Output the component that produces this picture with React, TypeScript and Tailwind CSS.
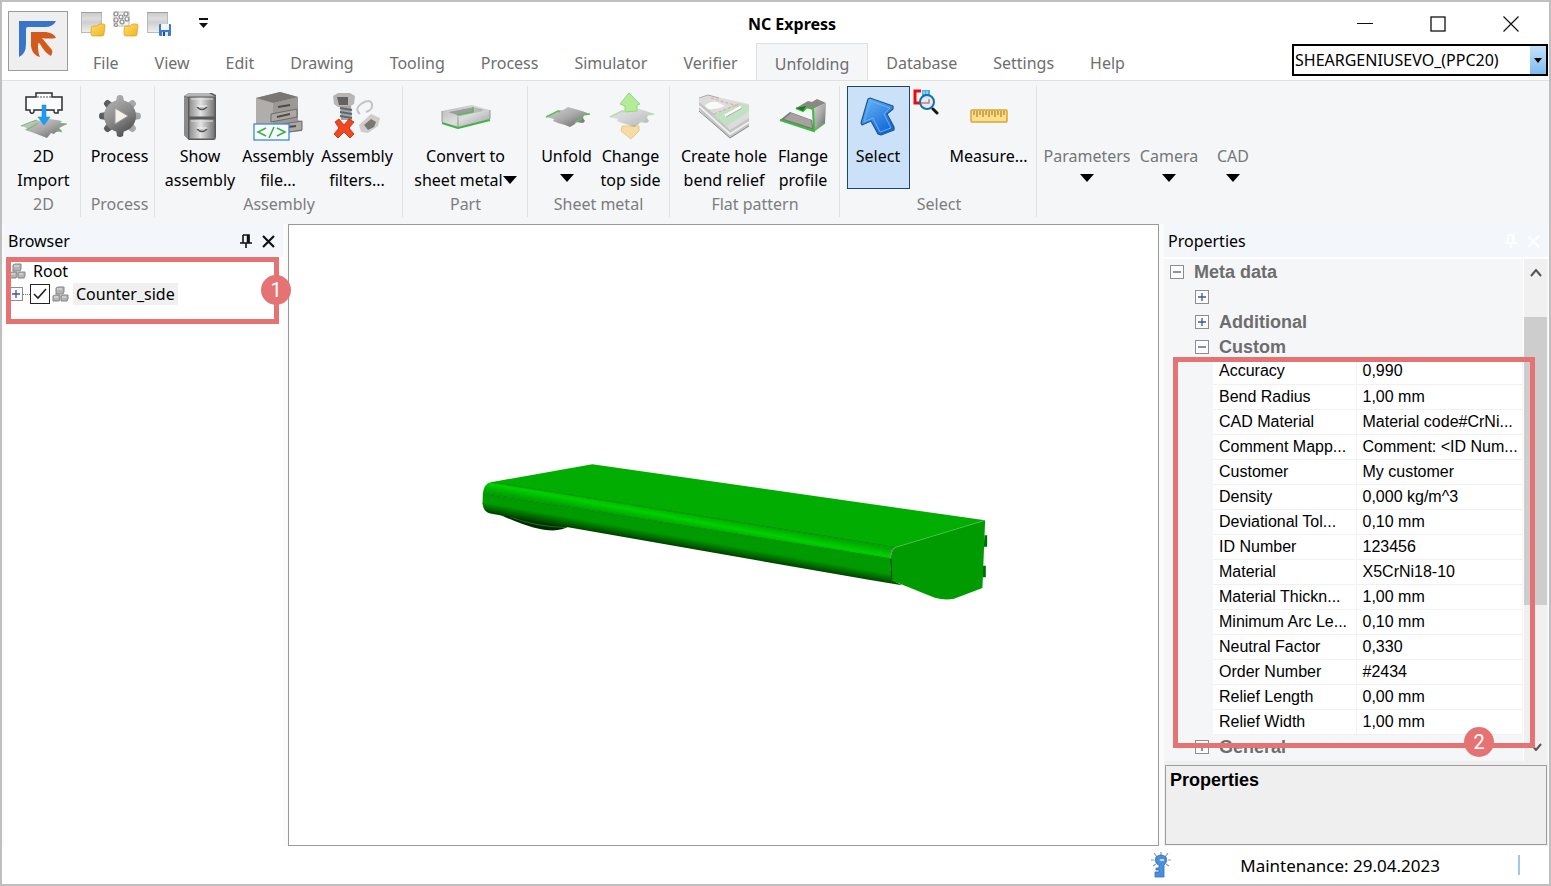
import React from 'react';
import { clsx } from 'clsx';

const tabs = [
  'File',
  'View',
  'Edit',
  'Drawing',
  'Tooling',
  'Process',
  'Simulator',
  'Verifier',
  'Unfolding',
  'Database',
  'Settings',
  'Help',
];

const customProps = [
  ['Accuracy', '0,990'],
  ['Bend Radius', '1,00 mm'],
  ['CAD Material', 'Material code#CrNi...'],
  ['Comment Mapp...', 'Comment: <ID Num...'],
  ['Customer', 'My customer'],
  ['Density', '0,000 kg/m^3'],
  ['Deviational Tol...', '0,10 mm'],
  ['ID Number', '123456'],
  ['Material', 'X5CrNi18-10'],
  ['Material Thickn...', '1,00 mm'],
  ['Minimum Arc Le...', '0,10 mm'],
  ['Neutral Factor', '0,330'],
  ['Order Number', '#2434'],
  ['Relief Length', '0,00 mm'],
  ['Relief Width', '1,00 mm'],
];

/* ---------- icons ---------- */

// shared gradients, referenced by id from the icons below
const Gradients = () => (
  <svg width="0" height="0" className="absolute" aria-hidden="true">
    <defs>
      <linearGradient id="metal" x1="0" y1="0" x2="1" y2="1">
        <stop offset="0" stopColor="#d6d6d6" />
        <stop offset="0.5" stopColor="#a8a8a8" />
        <stop offset="1" stopColor="#5c5c5c" />
      </linearGradient>
      <linearGradient id="gear" gradientUnits="userSpaceOnUse" x1="10" y1="4" x2="34" y2="40">
        <stop offset="0" stopColor="#b4b4b4" />
        <stop offset="0.5" stopColor="#8a8a8a" />
        <stop offset="1" stopColor="#4a4a4a" />
      </linearGradient>
      <linearGradient id="metalLight" x1="0" y1="0" x2="1" y2="1">
        <stop offset="0" stopColor="#b4b4b4" />
        <stop offset="0.5" stopColor="#dedede" />
        <stop offset="1" stopColor="#9a9a9a" />
      </linearGradient>
      <linearGradient id="drawer" x1="0" y1="0" x2="1" y2="0">
        <stop offset="0" stopColor="#8d8d8d" />
        <stop offset="0.45" stopColor="#e2e2e2" />
        <stop offset="1" stopColor="#727272" />
      </linearGradient>
      <linearGradient id="sheet" x1="0" y1="0" x2="0" y2="1">
        <stop offset="0" stopColor="#c9c9c9" />
        <stop offset="0.3" stopColor="#dcdcdc" />
        <stop offset="0.5" stopColor="#cfcfcf" />
        <stop offset="1" stopColor="#f0f0f0" />
      </linearGradient>
      <linearGradient id="cursor" x1="0" y1="0" x2="0.6" y2="1">
        <stop offset="0" stopColor="#6db9f7" />
        <stop offset="1" stopColor="#1668d8" />
      </linearGradient>
      <linearGradient id="folder" x1="0" y1="0" x2="1" y2="1">
        <stop offset="0" stopColor="#ffdc6b" />
        <stop offset="1" stopColor="#f0b323" />
      </linearGradient>
    </defs>
  </svg>
);

const Logo = () => (
  <svg width="58" height="58" viewBox="0 0 58 58">
    <path d="M10 9H47Q44 15 36 15H19Q17 15 17 17V32Q17 42 10 45Z" fill="#3a74c8" />
    <path
      d="M22 20H37Q45 21 47 26Q40 27 33 26L43 38Q44 40 42 44Q36 41 31 32Q29 29 29 34Q29 41 31 45Q23 43 22 34Z"
      fill="#d25a1c"
    />
  </svg>
);

const Folder = () => (
  <path
    d="M11 18Q11 15 14 15H17L19 13H24Q25 13 25 15L24 23Q24 25 22 25H13Q11 25 11 23Z"
    fill="url(#folder)"
    stroke="#dba019"
    strokeWidth="0.7"
  />
);

const OpenSheetIcon = () => (
  <svg width="26" height="26" viewBox="0 0 26 26">
    <rect x="1.500" y="1.500" width="20" height="20" fill="url(#sheet)" stroke="#b9b9b9" />
    <path d="M1 1.500H22" stroke="#a0a0a0" />
    <Folder />
  </svg>
);

const OpenPartsIcon = () => (
  <svg width="26" height="26" viewBox="0 0 26 26">
    <g fill="#f4f4f4" stroke="#8a8a8a" strokeWidth="1.2">
      <rect x="1" y="1" width="15" height="14" stroke="#c5c5c5" />
      <circle cx="3" cy="3" r="2" />
      <circle cx="8" cy="6" r="2" />
      <circle cx="13" cy="3" r="2" />
      <circle cx="3" cy="9" r="2" />
      <circle cx="9" cy="11" r="2" />
      <circle cx="14" cy="8" r="2" />
      <circle cx="3" cy="14" r="1.5" />
    </g>
    <Folder />
  </svg>
);

const SaveSheetIcon = () => (
  <svg width="26" height="26" viewBox="0 0 26 26">
    <rect x="1.500" y="1.500" width="20" height="20" fill="url(#sheet)" stroke="#b9b9b9" />
    <path d="M1 1.500H22" stroke="#a0a0a0" />
    <rect x="13" y="13" width="12" height="12" rx="1" fill="#3f78cf" />
    <rect x="15" y="13" width="8" height="6" fill="#f2f6fc" />
    <rect x="16" y="21" width="6" height="4" fill="#dfe8f5" />
    <rect x="17" y="21" width="2" height="4" fill="#27488c" />
  </svg>
);

const ImportIcon = () => (
  <svg width="48" height="50" viewBox="0 0 48 50">
    <path d="M1 35L10 32L16 29L22 30L30 28L42 30L40 32L47 33L39 37L42 40L36 41L34 43L31 42L27 47L14 42L5 39L7 37Z" fill="url(#metal)" />
    <path d="M1 35L11 31L17 29M7 39L18 32M38 32L47 33M37 39L42 41" stroke="#79bd6a" strokeWidth="1.200" fill="none" />
    <path
      d="M6 6H16V2H32V6H42V19H38V22H35Q34 22 34 20V19H14V20Q14 23 11 22Q10 22 10 19H6Z"
      fill="#fbfcfd"
      stroke="#2d2d2d"
      strokeWidth="1.500"
    />
    <path d="M17 6H31" stroke="#555" strokeDasharray="2 1" />
    <path d="M22 14H26V26H30L24 34L18 26H22Z" fill="#1e9cf2" stroke="#1688d8" strokeWidth="0.500" />
  </svg>
);

const GearIcon = () => (
  <svg width="44" height="44" viewBox="0 0 44 44">
    <g fill="url(#gear)">
      <path d="M18 8L19 2Q22 0 25 2L26 8V36L25 42Q22 44 19 42L18 36Z" />
      <path d="M18 8L19 2Q22 0 25 2L26 8V36L25 42Q22 44 19 42L18 36Z" transform="rotate(45 22 22)" />
      <path d="M18 8L19 2Q22 0 25 2L26 8V36L25 42Q22 44 19 42L18 36Z" transform="rotate(90 22 22)" />
      <path d="M18 8L19 2Q22 0 25 2L26 8V36L25 42Q22 44 19 42L18 36Z" transform="rotate(135 22 22)" />
      <circle cx="22" cy="22" r="16" />
    </g>
    <path d="M17 14L30 22L17 30Z" fill="#f5f2ea" stroke="#9a9a9a" />
  </svg>
);

const CabinetIcon = () => (
  <svg width="36" height="50" viewBox="0 0 36 50">
    <path d="M2 5L7 2H30L34 4V46L32 49H7L2 44Z" fill="#5b5b5b" />
    <path d="M2 5L7 2H27L34 6H7Z" fill="#b5b5b5" />
    <path d="M2 5L6 7V48L2 44Z" fill="#8b8b8b" />
    <rect x="7" y="6" width="26" height="20" fill="url(#drawer)" stroke="#5b5b5b" />
    <rect x="7" y="28" width="26" height="20" fill="url(#drawer)" stroke="#5b5b5b" />
    <path d="M9 8H31M9 30H31" stroke="#e3e3e3" />
    <path d="M15 16Q20 21 25 16M15 38Q20 43 25 38" stroke="#555" strokeWidth="1.500" fill="#ccc" />
    <path d="M15 15H25M15 37H25" stroke="#f4f4f4" />
  </svg>
);

const AssemblyFileIcon = () => (
  <svg width="50" height="50" viewBox="0 0 50 50">
    <path d="M3 7L27 1L45 6V29L49 31V40L20 43L3 36Z" fill="#9b9895" />
    <path d="M3 7L27 1L45 6L20 12Z" fill="#7a7673" />
    <path d="M3 7L20 12V40L3 35Z" fill="#b1adaa" />
    <path d="M20 12L45 6V29L20 35Z" fill="#9c9895" />
    <path d="M18 23L44 18V26L18 31ZM30 33L49 30V39L30 42Z" fill="#aca8a5" stroke="#6e6a68" strokeWidth="1" />
    <path d="M25 16L37 14M24 26L37 23M35 36L43 35" stroke="#4e4b49" strokeWidth="2" />
    <rect x="1" y="33" width="35" height="16" fill="#f7fbff" stroke="#4487d4" strokeWidth="1.300" />
    <path d="M13 37L5 41L13 45M24 37L32 41L24 45M21 36L16 47" stroke="#3fae49" strokeWidth="1.600" fill="none" />
  </svg>
);

const AssemblyFiltersIcon = () => (
  <svg width="50" height="48" viewBox="0 0 50 48">
    <path d="M1 4L6 1L18 1L23 4L22 12L17 15H6L2 12Z" fill="#b9b5b2" />
    <path d="M5 5H16V13H7Z" fill="#65615e" />
    <path d="M8 14H19L20 28H9Z" fill="#a5a5a5" />
    <path d="M8 16L20 18M8 20L20 22M8 24L20 26" stroke="#5e6770" strokeWidth="2" />
    <path d="M28 22Q22 17 29 12Q38 6 40 12Q41 18 34 20" fill="none" stroke="#c4c4c4" strokeWidth="2" />
    <path d="M27 33L39 22L48 26L46 34L36 41L29 40Z" fill="#cfccca" />
    <path d="M32 33L39 27L44 30L42 35L36 38Z" fill="#7a7674" />
    <path
      d="M3 30L7 27L12 33L17 27L22 30L17 36L22 42L18 46L12 40L6 46L2 42L7 36Z"
      fill="#f4471f"
      stroke="#b82a0c"
      strokeWidth="0.800"
    />
  </svg>
);

const ConvertIcon = () => (
  <svg width="50" height="26" viewBox="0 0 50 26">
    <path d="M1 8L31 2L49 7V17L17 25L1 20Z" fill="url(#metalLight)" />
    <path d="M5 9L31 4L45 7L18 13Z" fill="#9c9c9c" stroke="#cfcfcf" />
    <path d="M15 12L32 9L31 4L42 8L19 13Z" fill="#b9bcb9" />
    <path d="M16 12L32 9V4" stroke="#58b75b" strokeWidth="1.500" fill="none" />
    <path d="M1 20L17 25L49 17" stroke="#46b04a" strokeWidth="2" fill="none" />
    <path d="M17 14V24M1 8V19M49 7V16" stroke="#8f9d8f" fill="none" />
  </svg>
);

const SheetPlate = () => (
  <g>
    <path
      d="M3 14L15 7L20 7L25 4L39 8L47 11L41 12L40 15L42 18L40 20L33 19L32 21L27 24L22 22L15 20L10 18L11 16Z"
      fill="url(#metal)"
    />
    <path d="M3 14L15 8L17 9M40 12L47 11M33 19L38 16" stroke="#5fc258" strokeWidth="1.500" fill="none" />
  </g>
);

const UnfoldIcon = () => (
  <svg width="48" height="26" viewBox="0 0 48 26">
    <SheetPlate />
  </svg>
);

const ChangeSideIcon = () => (
  <svg width="48" height="50" viewBox="0 0 48 50">
    <path d="M15 35H32V40L24 48L14 40Z" fill="#f5dba4" stroke="#e8c987" />
    <g transform="translate(0 12)" opacity="0.45">
      <SheetPlate />
    </g>
    <path d="M22 2L33 13L30 14V20L18 21V15L13 13Z" fill="#b3eb98" stroke="#92d979" />
  </svg>
);

const HoleReliefIcon = () => (
  <svg width="50" height="48" viewBox="0 0 50 48">
    <path d="M0 6L9 3L50 12V34L31 46L0 18Z" fill="#dcdcdc" />
    <path d="M0 10L14 21L31 38L50 26V34L31 46L0 18Z" fill="#c3c3c3" />
    <path d="M0 14L31 42L50 30" stroke="#efefef" strokeWidth="2" fill="none" />
    <path d="M0 19L31 46L50 34" stroke="#8b8b8b" fill="none" />
    <path d="M0 6L9 3L20 6" stroke="#aaa" fill="none" />
    <path d="M13 24L38 11L50 13V19L28 34Z" fill="#b5e2b8" opacity="0.7" />
    <path d="M6 14Q10 9 18 10L26 14Q18 18 9 17Z" fill="#fafafa" />
    <path d="M12 6L42 15M15 22L40 12" stroke="#e6aaa5" strokeWidth="1.200" strokeDasharray="3 2" />
    <path d="M26 24L42 15" stroke="#fff" strokeWidth="3" />
    <path d="M27 25L43 16" stroke="#999" strokeWidth="0.800" />
  </svg>
);

const FlangeIcon = () => (
  <svg width="48" height="36" viewBox="0 0 48 36">
    <path d="M1 22L11 14L33 22L35 33Z" fill="#777" />
    <path d="M5 21L12 15L32 22L33 30Z" fill="#a6a29f" />
    <path d="M17 10L29 3L33 4L38 1L47 5L34 11L27 10L24 13Z" fill="#8a8785" />
    <path d="M34 11L47 5L46 25L35 33Z" fill="url(#metal)" />
    <path d="M1 22L35 33L34 11L28 9L24 13L17 10" fill="none" stroke="#3dbb3d" strokeWidth="2" />
    <path d="M17 10L27 8L24 13Z" fill="#1e7a1e" />
    <path d="M35 33L46 25" stroke="#4fc34f" strokeWidth="1.200" />
  </svg>
);

const CursorIcon = () => (
  <svg width="38" height="40" viewBox="0 0 38 40">
    <path
      d="M11 2L34 10V13L28 18L35 31V34L22 39L19 38L12 25L3 29L2 27L9 3Z"
      fill="url(#cursor)"
      stroke="#1f568f"
      strokeWidth="1.200"
      strokeLinejoin="round"
    />
    <path d="M11 5L31 12L25 18L32 32L21 36L14 22L5 26Z" fill="none" stroke="#64b3f5" />
  </svg>
);

const ZoomSelectIcon = () => (
  <svg width="26" height="26" viewBox="0 0 26 26">
    <path d="M8 2H2V14H8" stroke="#f20808" strokeWidth="3" fill="none" />
    <rect x="9" y="1" width="8" height="8" fill="#49a8ee" />
    <path d="M11 2V5M14 2V5" stroke="#d8efff" strokeWidth="1" />
    <circle cx="14" cy="13" r="7" fill="#d9f0fb" fillOpacity="0.900" stroke="#14749b" strokeWidth="2" />
    <path d="M8 14H16V10" stroke="#f0697a" strokeWidth="1.500" fill="none" />
    <path d="M20 20L24 24" stroke="#171717" strokeWidth="3" strokeLinecap="round" />
  </svg>
);

const RulerIcon = () => (
  <svg width="38" height="14" viewBox="0 0 38 14">
    <rect x="1" y="1" width="36" height="12" rx="1" fill="#fae08e" stroke="#dba432" strokeWidth="1.500" />
    <path
      d="M4 2V6M7 2V8M10 2V6M13 2V8M16 2V6M19 2V8M22 2V6M25 2V8M28 2V6M31 2V8M34 2V6"
      stroke="#b07f1e"
      strokeWidth="1.200"
    />
  </svg>
);

const Caret = () => (
  <svg width="14" height="8" viewBox="0 0 14 8" className="shrink-0">
    <path d="M0 0H14L7 8Z" fill="#000" />
  </svg>
);

const PartsIcon = () => (
  <svg width="17" height="16" viewBox="0 0 17 16">
    <g fill="#b4b4b4" stroke="#858585" strokeWidth="1">
      <path d="M4 2L6 1H12V6L11 8H4Z" />
      <path d="M1 10L3 9H8V13L7 15H1Z" />
      <path d="M9 10L11 9H16V13L15 15H9Z" />
    </g>
    <path d="M5 3H10M2 11H6M10 11H14" stroke="#e8e8e8" />
  </svg>
);

const PinIcon = () => (
  <svg width="12" height="14" viewBox="0 0 12 14">
    <path d="M3 1H9V9M3 1V9M0 9H12M6 9V14" stroke="currentColor" strokeWidth="1.600" fill="none" />
    <path d="M8 1V9" stroke="currentColor" strokeWidth="2.500" />
  </svg>
);

const CrossIcon = () => (
  <svg width="13" height="13" viewBox="0 0 13 13">
    <path d="M1 1L12 12M12 1L1 12" stroke="currentColor" strokeWidth="2.200" />
  </svg>
);

const KeyIcon = () => (
  <svg width="22" height="26" viewBox="0 0 22 26">
    <path d="M11 0V4M4 1L7 5M18 1L15 5M1 8H4M21 8H18M3 14L6 12M19 14L16 12" stroke="#8a9aad" strokeWidth="1.200" />
    <path
      d="M6 5Q11 1 16 5Q18 9 15 12L14 13V25H5V20H9V18H6V16H9V13L7 12Q4 9 6 5Z"
      fill="#4a8fdc"
      stroke="#2f6fb9"
      strokeWidth="0.800"
    />
    <ellipse cx="12" cy="8" rx="3" ry="1.500" fill="#cfe3f8" stroke="#2f6fb9" strokeWidth="0.600" />
  </svg>
);

// the 3D part that is shown in the viewport
const Part = () => (
  <svg width="530" height="160" viewBox="0 0 1568 473" role="img" aria-label="Counter_side">
    <defs>
      <linearGradient id="edgeTop" gradientUnits="userSpaceOnUse" x1="650" y1="185" x2="642" y2="229">
        <stop offset="0" stopColor="#00a800" />
        <stop offset="0.5" stopColor="#00d000" />
        <stop offset="1" stopColor="#00a400" />
      </linearGradient>
      <linearGradient id="edgeBottom" gradientUnits="userSpaceOnUse" x1="650" y1="262" x2="644" y2="296">
        <stop offset="0" stopColor="#009a00" />
        <stop offset="1" stopColor="#002e00" />
      </linearGradient>
    </defs>
    <path d="M90 192Q190 238 245 238Q275 236 292 226L200 205Z" fill="#032b03" />
    <path d="M120 198Q190 226 285 229" stroke="#0a7a0a" strokeWidth="3" fill="none" />
    <path d="M1522 252H1530V286H1520ZM1518 342H1526V376H1516Z" fill="#006b00" />
    <path d="M62 95L362 42L1524 208L1258 288Z" fill="#00ad00" />
    <path d="M62 95L1258 288Q1246 296 1245 322L38 128Q42 98 62 95Z" fill="url(#edgeTop)" />
    <path d="M38 128L1245 322V362L37 160Z" fill="#009b00" />
    <path d="M37 156L1245 358L1248 384L1278 400L1180 384L60 188Q38 182 37 156Z" fill="url(#edgeBottom)" />
    <path d="M1258 288L1524 208L1516 408L1432 440Q1405 446 1375 437L1248 386L1245 322Q1246 296 1258 288Z" fill="#009b00" />
    <path d="M38 128L1245 322M62 95L1258 288" stroke="#007400" strokeWidth="2" fill="none" />
    <path d="M1258 288L1524 208" stroke="#4fc04f" strokeWidth="2" />
    <path d="M1248 384L1245 322" stroke="#003c00" strokeWidth="3" />
    <path d="M1244 318Q1246 294 1258 288" stroke="#8a8a8a" strokeWidth="3" fill="none" />
  </svg>
);

/* ---------- ribbon ---------- */

type ButtonProps = {
  lines: string[];
  width: string;
  icon?: React.ReactNode;
  caret?: 'inline' | 'below';
  active?: boolean;
  muted?: boolean;
};

const RibbonButton = ({ lines, width, icon, caret, active, muted }: ButtonProps) => (
  <button
    type="button"
    className={clsx(
      'flex shrink-0 flex-col items-center border whitespace-nowrap',
      width,
      active ? 'h-[103px] border-[#1f4466] bg-[#cbe1f7]' : 'h-[106px] border-transparent',
      muted && 'text-[#777]'
    )}
  >
    <span className="flex h-[57px] shrink-0 items-center justify-center">{icon}</span>
    {lines.map((line, i) => (
      <span key={line} className="flex h-6 items-center leading-6">
        {line}
        {caret === 'inline' && i === lines.length - 1 && <Caret />}
      </span>
    ))}
    {caret === 'below' && (
      <span className="flex h-5 items-center">
        <Caret />
      </span>
    )}
  </button>
);

type GroupProps = {
  label?: string;
  className: string;
  children: React.ReactNode;
};

const RibbonGroup = ({ label, className, children }: GroupProps) => (
  <section className={clsx('flex h-[131px] shrink-0 flex-col', className)}>
    <div className="flex justify-center">{children}</div>
    {label && <div className="text-center leading-6 text-[#7d7d7d]">{label}</div>}
  </section>
);

const Ribbon = () => (
  <div className="flex h-36 overflow-hidden border-t border-[#dfe1e3] bg-[#f4f6f8] pt-[5px] pl-px">
    <RibbonGroup label="2D" className="w-[78px] border-r border-[#dfe2e5] pl-1">
      <RibbonButton lines={['2D', 'Import']} width="w-[70px]" icon={<ImportIcon />} />
    </RibbonGroup>
    <RibbonGroup label="Process" className="w-[74px] border-r border-[#dfe2e5] pl-1">
      <RibbonButton lines={['Process']} width="w-[69px]" icon={<GearIcon />} />
    </RibbonGroup>
    <RibbonGroup label="Assembly" className="w-[248px] border-r border-[#dfe2e5] pl-px">
      <RibbonButton lines={['Show', 'assembly']} width="w-[78px]" icon={<CabinetIcon />} />
      <RibbonButton lines={['Assembly', 'file...']} width="w-[78px]" icon={<AssemblyFileIcon />} />
      <RibbonButton lines={['Assembly', 'filters...']} width="w-[80px]" icon={<AssemblyFiltersIcon />} />
    </RibbonGroup>
    <RibbonGroup label="Part" className="w-[125px] border-r border-[#dfe2e5] pl-px">
      <RibbonButton lines={['Convert to', 'sheet metal']} width="w-[114px]" icon={<ConvertIcon />} caret="inline" />
    </RibbonGroup>
    <RibbonGroup label="Sheet metal" className="w-[142px] border-r border-[#dfe2e5]">
      <RibbonButton lines={['Unfold']} width="w-[64px]" icon={<UnfoldIcon />} caret="below" />
      <RibbonButton lines={['Change', 'top side']} width="w-[64px]" icon={<ChangeSideIcon />} />
    </RibbonGroup>
    <RibbonGroup label="Flat pattern" className="w-[170px] border-r border-[#dfe2e5] pl-px">
      <RibbonButton lines={['Create hole', 'bend relief']} width="w-[96px]" icon={<HoleReliefIcon />} />
      <RibbonButton lines={['Flange', 'profile']} width="w-[62px]" icon={<FlangeIcon />} />
    </RibbonGroup>
    <RibbonGroup label="Select" className="w-[197px] border-r border-[#dfe2e5] pl-[2px]">
      <RibbonButton lines={['Select']} width="w-[63px]" icon={<CursorIcon />} active />
      <button type="button" aria-label="Zoom to selection" className="mr-1 flex w-8 justify-center self-start pt-[3px]">
        <ZoomSelectIcon />
      </button>
      <RibbonButton lines={['Measure...']} width="w-[86px]" icon={<RulerIcon />} />
    </RibbonGroup>
    <RibbonGroup className="pl-1">
      <RibbonButton lines={['Parameters']} width="w-[92px]" caret="below" muted />
      <RibbonButton lines={['Camera']} width="w-[72px]" caret="below" muted />
      <RibbonButton lines={['CAD']} width="w-[56px]" caret="below" muted />
    </RibbonGroup>
  </div>
);

/* ---------- title bar ---------- */

const Header = () => (
  <header className="flex h-[78px] bg-white">
    <button
      type="button"
      aria-label="Application menu"
      className="mt-[9px] ml-[6px] flex h-[60px] w-[60px] shrink-0 items-center justify-center border border-[#9b9b9b] bg-[#efefef]"
    >
      <Logo />
    </button>
    <div className="flex min-w-0 flex-1 flex-col">
      <div className="flex h-[42px] items-center pt-[2px]">
        <div className="flex w-[188px] items-center gap-[7px] pl-3">
          <button type="button" aria-label="Open sheet">
            <OpenSheetIcon />
          </button>
          <button type="button" aria-label="Open parts">
            <OpenPartsIcon />
          </button>
          <button type="button" aria-label="Save">
            <SaveSheetIcon />
          </button>
          <button type="button" aria-label="Customize toolbar" className="ml-5">
            <svg width="9" height="11" viewBox="0 0 9 11">
              <path d="M0 1H9" stroke="#111" strokeWidth="2" />
              <path d="M0 5H9L4.500 10Z" fill="#111" />
            </svg>
          </button>
        </div>
        <h1 className="flex-1 text-center text-base font-bold">NC Express</h1>
        <button type="button" aria-label="Minimize" className="flex w-[73px] justify-center">
          <svg width="16" height="16" viewBox="0 0 16 16">
            <path d="M0 7.500H16" stroke="#111" />
          </svg>
        </button>
        <button type="button" aria-label="Maximize" className="flex w-[73px] justify-center">
          <svg width="16" height="16" viewBox="0 0 16 16">
            <rect x="1" y="1" width="14" height="14" fill="none" stroke="#111" strokeWidth="1.300" />
          </svg>
        </button>
        <button type="button" aria-label="Close" className="mr-[2px] flex w-[73px] justify-center">
          <svg width="16" height="16" viewBox="0 0 16 16">
            <path d="M0.500 0.500L15.500 15.500M15.500 0.500L0.500 15.500" stroke="#111" strokeWidth="1.200" />
          </svg>
        </button>
      </div>
      <div className="flex flex-1 items-start justify-between">
        <nav className="ml-[7px] flex">
          {tabs.map((tab) => (
            <button
              key={tab}
              type="button"
              className={clsx(
                'h-[37px] border-t px-[18px] pt-[2px] text-[#6e6e6e]',
                tab === 'Unfolding'
                  ? '-mb-px h-[38px] border-x border-[#dfe1e3] bg-[#f4f6f8]'
                  : 'border-transparent'
              )}
            >
              {tab}
            </button>
          ))}
        </nav>
        <div className="relative mt-px mr-px w-64">
          <select
            aria-label="Machine"
            className="h-8 w-full appearance-none rounded-none border-2 border-black bg-white pr-5 pl-px text-base"
          >
            <option>SHEARGENIUSEVO_(PPC20)</option>
          </select>
          <span className="pointer-events-none absolute top-[2px] right-[2px] flex h-7 w-4 items-center justify-center bg-linear-to-b from-[#c4e1f8] to-[#7fbcf0]">
            <svg width="8" height="5" viewBox="0 0 8 5">
              <path d="M0 0H8L4 5Z" fill="#000" />
            </svg>
          </span>
        </div>
      </div>
    </div>
  </header>
);

/* ---------- panels ---------- */

const Expander = ({ open, name }: { open?: boolean; name: string }) => (
  <button type="button" aria-label={name} aria-expanded={!!open} className="shrink-0">
    <svg width="14" height="14" viewBox="0 0 14 14">
      <rect x="0.500" y="0.500" width="13" height="13" fill="#fcfcfc" stroke="#8d8d8d" />
      <path d={open ? 'M3 7H11' : 'M3 7H11M7 3V11'} stroke="#3b56a3" strokeWidth="1.300" />
    </svg>
  </button>
);

const PanelHeader = ({ title, faded }: { title: string; faded?: boolean }) => (
  <div className="flex h-[33px] shrink-0 items-center bg-[#f3f6fb] pr-2 pl-1">
    <h2 className="flex-1">{title}</h2>
    <div className={clsx('flex items-center gap-[10px] pt-px', faded ? 'text-white' : 'text-[#111]')}>
      <button type="button" aria-label={`Pin ${title}`}>
        <PinIcon />
      </button>
      <button type="button" aria-label={`Close ${title}`}>
        <CrossIcon />
      </button>
    </div>
  </div>
);

const Badge = ({ number, className }: { number: number; className: string }) => (
  <span
    className={clsx(
      'absolute flex h-[30px] w-[30px] items-center justify-center rounded-full bg-[#e57373] font-[Roboto,sans-serif] text-xl text-white',
      className
    )}
  >
    {number}
  </span>
);

const BrowserPanel = () => (
  <aside className="relative ml-[2px] w-[279px] shrink-0 bg-white">
    <PanelHeader title="Browser" />
    <div className="flex flex-col pt-[3px] pl-[5px]">
      <div className="flex h-[22px] items-center gap-[7px]">
        <PartsIcon />
        <span>Root</span>
      </div>
      <div className="flex h-6 items-center">
        <Expander name="Counter_side" />
        <span className="w-[7px] border-t border-dotted border-[#777]" />
        <span className="relative flex">
          <input
            id="counter"
            type="checkbox"
            defaultChecked
            className="peer h-5 w-5 appearance-none border border-[#222] bg-white"
          />
          <svg
            width="20"
            height="20"
            viewBox="0 0 20 20"
            className="pointer-events-none absolute inset-0 hidden peer-checked:block"
          >
            <path d="M4 10L8 14L16 5" fill="none" stroke="#222" strokeWidth="1.600" />
          </svg>
        </span>
        <span className="ml-[2px]">
          <PartsIcon />
        </span>
        <label htmlFor="counter" className="ml-1 bg-[#f0f0f0] px-[3px] leading-[22px]">
          Counter_side
        </label>
      </div>
    </div>
    {/* callout 1 */}
    <div className="pointer-events-none absolute top-[33px] right-1 left-[2px] h-[67px] border-[5px] border-[#e57373]">
      <Badge number={1} className="top-[13px] -right-[17px]" />
    </div>
  </aside>
);

const CategoryRow = ({ name, open, root }: { name: string; open?: boolean; root?: boolean }) => (
  <tr className="h-[25px]">
    <th colSpan={3} className="p-0 text-left text-lg leading-6 font-bold text-[#6d6d6d]">
      <div className={clsx('flex h-[25px] items-center gap-[10px]', root ? 'pl-[6px]' : 'pl-[31px]')}>
        <Expander open={open} name={name || 'Unnamed'} />
        {name}
      </div>
    </th>
  </tr>
);

const PropertiesPanel = () => (
  <aside className="relative mr-px ml-[5px] flex w-[384px] shrink-0 flex-col bg-[#f0f0f0]">
    <PanelHeader title="Properties" faded />
    <div className="flex min-h-0 flex-1 border-t-2 border-white bg-[#f4f6f8] font-['Liberation_Sans',Arial,sans-serif]">
      <div className="min-w-0 flex-1 overflow-hidden">
        <table className="w-full table-fixed border-collapse">
          <colgroup>
            <col className="w-[49px]" />
            <col className="w-[143px]" />
            <col />
          </colgroup>
          <tbody>
            <CategoryRow name="Meta data" open root />
            <CategoryRow name="" />
            <CategoryRow name="Additional" />
            <CategoryRow name="Custom" open />
            {customProps.map(([name, value]) => (
              <tr key={name} className="h-[25px]">
                <td className="p-0" />
                <td className="border-r border-b border-[#f1f1f1] bg-white p-0 pl-[6px] leading-6 whitespace-nowrap">
                  {name}
                </td>
                <td className="border-b border-[#f1f1f1] bg-white p-0 pl-[6px] leading-6 whitespace-nowrap">
                  {value}
                </td>
              </tr>
            ))}
            <CategoryRow name="General" />
          </tbody>
        </table>
      </div>
      {/* scrollbar */}
      <div className="ml-px mr-px flex w-6 shrink-0 flex-col items-center justify-between border-l border-white bg-[#f0f0f0]">
        <svg width="12" height="8" viewBox="0 0 12 8" className="mt-[10px] mb-10 shrink-0">
          <path d="M1 7L6 1L11 7" fill="none" stroke="#555" strokeWidth="2" />
        </svg>
        <div className="h-[288px] w-full shrink-0 bg-[#cdcdcd]" />
        <div className="flex-1" />
        <svg width="12" height="8" viewBox="0 0 12 8" className="mb-[10px] shrink-0">
          <path d="M1 1L6 7L11 1" fill="none" stroke="#555" strokeWidth="2" />
        </svg>
      </div>
    </div>
    <div className="mt-1 mr-px mb-px ml-px h-20 shrink-0 border border-[#9d9d9d] bg-[#efefef] px-1 font-['Liberation_Sans',Arial,sans-serif] text-lg font-bold">
      Properties
    </div>
    {/* callout 2 */}
    <div className="pointer-events-none absolute top-[133px] right-[13px] left-[9px] h-[391px] border-[5px] border-[#e57373]">
      <Badge number={2} className="right-[36px] -bottom-[14px]" />
    </div>
  </aside>
);

export default function App() {
  return (
    <div className="flex min-h-screen flex-col border-2 border-[#bfbfbf] bg-[#fbfbfc] font-['Noto_Sans','Open_Sans',sans-serif] text-base text-black">
      <Gradients />
      <Header />
      <Ribbon />
      <main className="flex flex-1">
        <BrowserPanel />
        <div className="ml-[5px] flex min-w-0 flex-1 items-center justify-center overflow-hidden border border-[#9a9a9a] bg-white pb-[10px] pl-[22px]">
          <Part />
        </div>
        <PropertiesPanel />
      </main>
      <footer className="flex h-[38px] items-center justify-end bg-white">
        <KeyIcon />
        <span className="ml-[68px] pt-[2px] text-[17px]">Maintenance: 29.04.2023</span>
        <span className="mr-[29px] ml-[78px] h-5 border-l-2 border-[#9cc9ee]" />
      </footer>
    </div>
  );
}
